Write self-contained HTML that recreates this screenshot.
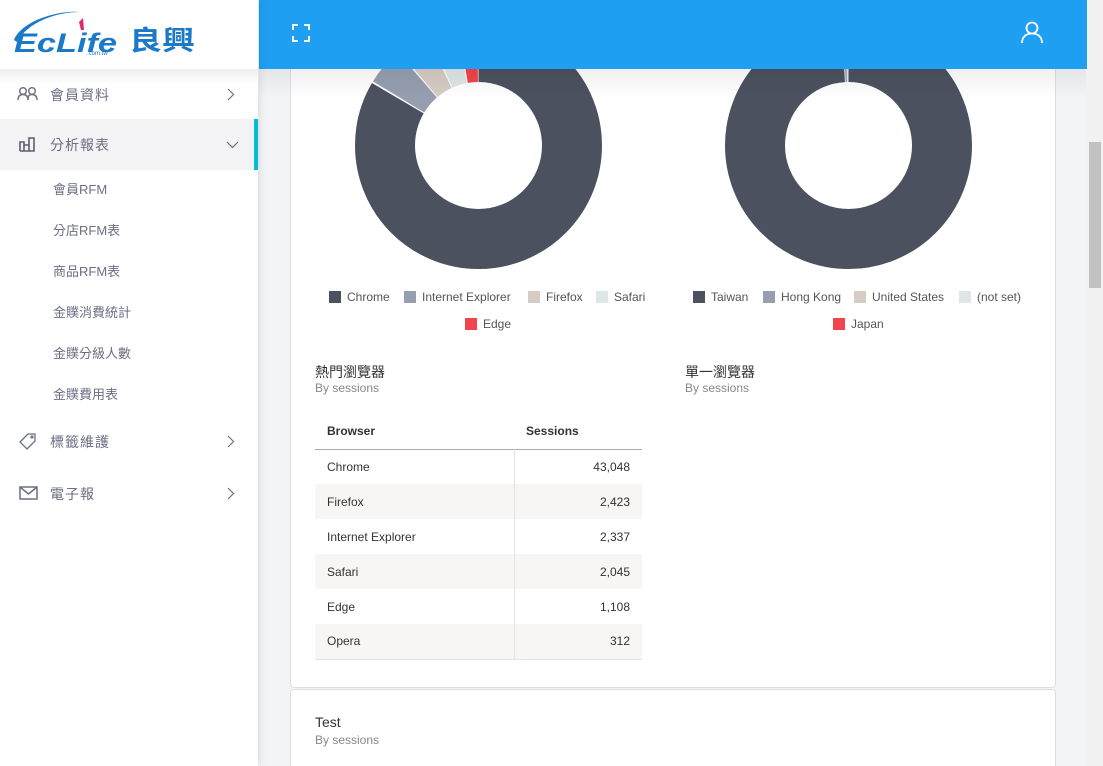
<!DOCTYPE html>
<html><head><meta charset="utf-8">
<style>
*{margin:0;padding:0;box-sizing:border-box}
html,body{width:1103px;height:766px;overflow:hidden}
body{background:#f3f4f8;font-family:"Liberation Sans","Noto Sans CJK TC",sans-serif;position:relative}
.abs{position:absolute}
#side{left:0;top:0;width:258px;height:766px;background:#fff;box-shadow:1px 0 8px rgba(0,0,0,.12);z-index:3}
.mi{position:absolute;left:0;width:258px;height:51px;color:#6b6f82;font-size:14px}
.mi .t{position:absolute;left:50px;top:50%;transform:translateY(-50%);letter-spacing:1px}
.mi svg{position:absolute}
.sub{position:absolute;left:53px;font-size:13px;color:#6b6f82;line-height:16px}
#hdr{left:259px;top:0;width:828px;height:69px;background:#1e9ff2;z-index:2}
.card{position:absolute;background:#fff;border:1px solid #dcdde2;border-radius:4px}
.lg{position:absolute;font-size:12px;color:#555;white-space:nowrap;line-height:14px}
.lg i{display:inline-block;width:12px;height:12px;vertical-align:-2px;margin-right:6px}
.tt{position:absolute;font-size:14px;color:#333}
.ss{position:absolute;font-size:12px;color:#888}
table{border-collapse:collapse;font-size:12px;color:#333}
td{height:35px;padding:0 12px}
</style></head><body>
<div id="side" class="abs">
  <svg class="abs" style="left:0;top:0" width="210" height="68" viewBox="0 0 210 68">
    <path d="M14 40 C22 20 60 10 80 12 C56 12 28 22 17 42Z" fill="#1a7ac8"/>
    <text x="14" y="52" font-family="Liberation Sans" font-weight="bold" font-style="italic" font-size="27" fill="#1a7ac8" textLength="103" lengthAdjust="spacingAndGlyphs">EcLife</text>
    <path d="M79 22 l4 -4 l1 12 l-3 0z" fill="#e4237a"/>
    <text x="87" y="55" font-family="Liberation Sans" font-size="6" fill="#1a7ac8">.com.tw</text>
    <text x="129" y="50" font-family="Noto Sans CJK TC" font-weight="bold" font-size="27" fill="#1a7ac8" textLength="66" lengthAdjust="spacingAndGlyphs">良興</text>
  </svg>
  <div class="mi" style="top:69px;background:linear-gradient(#eeeef0,#fff 30%)">
    <svg style="left:17px;top:17px" width="22" height="16" viewBox="0 0 22 16" fill="none" stroke="#6b6f82" stroke-width="1.4"><circle cx="6" cy="5" r="3.3"/><path d="M1 14c0-4 2-5.5 5-5.5s5 1.5 5 5.5"/><circle cx="15" cy="5" r="3.3"/><path d="M11 14c0-4 1-5.5 4-5.5s5 1.5 5 5.5"/></svg>
    <span class="t">會員資料</span>
    <svg style="left:227px;top:19px" width="8" height="13" fill="none" stroke="#6b6f82" stroke-width="1.2"><path d="M1 1l5.5 5.5L1 12"/></svg>
  </div>
  <div class="mi" style="top:119px;background:#f3f3f5;border-right:4px solid #00bcd4">
    <svg style="left:19px;top:17px" width="18" height="16" fill="none" stroke="#5b5f72" stroke-width="1.6"><path d="M1 15V6h4v9M5 15V9h5v6M10 15V2h5v13H1"/></svg>
    <span class="t">分析報表</span>
    <svg style="left:226px;top:22px" width="13" height="8" fill="none" stroke="#6b6f82" stroke-width="1.2"><path d="M1 1l5.5 5.5L12 1"/></svg>
  </div>
  <div class="sub" style="top:182px">會員RFM</div>
  <div class="sub" style="top:223px">分店RFM表</div>
  <div class="sub" style="top:264px">商品RFM表</div>
  <div class="sub" style="top:305px">金贌消費統計</div>
  <div class="sub" style="top:346px">金贌分級人數</div>
  <div class="sub" style="top:387px">金贌費用表</div>
  <div class="mi" style="top:416px">
    <svg style="left:18px;top:16px" width="20" height="18" fill="none" stroke="#6b6f82" stroke-width="1.3"><path d="M2 10L10 2h7v7l-8 8z"/><circle cx="14" cy="5" r="1"/></svg>
    <span class="t">標籤維護</span>
    <svg style="left:227px;top:19px" width="8" height="13" fill="none" stroke="#6b6f82" stroke-width="1.2"><path d="M1 1l5.5 5.5L1 12"/></svg>
  </div>
  <div class="mi" style="top:468px">
    <svg style="left:19px;top:18px" width="19" height="14" fill="none" stroke="#6b6f82" stroke-width="1.5"><rect x="1" y="1" width="17" height="12"/><path d="M1 1l8.5 7L18 1"/></svg>
    <span class="t">電子報</span>
    <svg style="left:227px;top:19px" width="8" height="13" fill="none" stroke="#6b6f82" stroke-width="1.2"><path d="M1 1l5.5 5.5L1 12"/></svg>
  </div>
</div>

<div id="hdr" class="abs">
  <svg style="position:absolute;left:33px;top:24px" width="18" height="18" fill="none" stroke="#fff" stroke-width="2"><path d="M1 6V1h5M12 1h5v5M17 12v5h-5M6 17H1v-5"/></svg>
  <svg style="position:absolute;left:762px;top:21px" width="22" height="23" fill="none" stroke="#fff" stroke-width="1.8"><circle cx="11" cy="7" r="5.5"/><path d="M1 22c0-6 4-9.5 10-9.5s10 3.5 10 9.5"/></svg>
</div>

<div class="abs" style="left:1086px;top:0;width:17px;height:766px;background:#f1f1f1"></div>
<div class="abs" style="left:1089px;top:142px;width:12px;height:146px;background:#c1c1c1"></div>

<div class="card" style="left:290px;top:-20px;width:766px;height:708px"></div>
<div class="card" style="left:290px;top:689px;width:766px;height:90px"></div>
<div class="abs" style="left:259px;top:69px;width:827px;height:30px;background:linear-gradient(rgba(0,0,0,.06),rgba(0,0,0,0));z-index:1"></div>

<svg class="abs" style="left:0;top:0;z-index:0" width="1103" height="766">
  <g transform="translate(478.5,145.5) rotate(-90)" fill="none" stroke-width="60">
    <circle r="93.5" stroke="#4c5160" stroke-dasharray="490 600" stroke-dashoffset="0"/>
    <circle r="93.5" stroke="#959fb0" stroke-dasharray="29 600" stroke-dashoffset="-491.5"/>
    <circle r="93.5" stroke="#d6ccc4" stroke-dasharray="24.5 600" stroke-dashoffset="-521.8"/>
    <circle r="93.5" stroke="#dfe7e6" stroke-dasharray="22.5 600" stroke-dashoffset="-547.6"/>
    <circle r="93.5" stroke="#f2444a" stroke-dasharray="15 600" stroke-dashoffset="-571.4"/>
  </g>
  <g transform="translate(848.5,145.5) rotate(-90)" fill="none" stroke-width="60">
    <circle r="93.5" stroke="#4c5160" stroke-dasharray="582 600"/>
    <circle r="93.5" stroke="#959fb0" stroke-dasharray="2 600" stroke-dashoffset="-583"/>
    <circle r="93.5" stroke="#dfe7e6" stroke-dasharray="1.5 600" stroke-dashoffset="-585.5"/>
  </g>
</svg>

<div class="lg" style="left:329px;top:290px"><i style="background:#4c5160"></i>Chrome</div>
<div class="lg" style="left:404px;top:290px"><i style="background:#959fb0"></i>Internet Explorer</div>
<div class="lg" style="left:528px;top:290px"><i style="background:#d6ccc4"></i>Firefox</div>
<div class="lg" style="left:596px;top:290px"><i style="background:#dfe7e6"></i>Safari</div>
<div class="lg" style="left:465px;top:317px"><i style="background:#f2444a"></i>Edge</div>

<div class="lg" style="left:693px;top:290px"><i style="background:#4c5160"></i>Taiwan</div>
<div class="lg" style="left:763px;top:290px"><i style="background:#959fb0"></i>Hong Kong</div>
<div class="lg" style="left:854px;top:290px"><i style="background:#d6ccc4"></i>United States</div>
<div class="lg" style="left:959px;top:290px"><i style="background:#dfe7e6"></i>(not set)</div>
<div class="lg" style="left:833px;top:317px"><i style="background:#f2444a"></i>Japan</div>

<div class="tt" style="left:315px;top:362px">熱門瀏覽器</div>
<div class="ss" style="left:315px;top:381px">By sessions</div>
<div class="tt" style="left:685px;top:362px">單一瀏覽器</div>
<div class="ss" style="left:685px;top:381px">By sessions</div>

<table class="abs" style="left:315px;top:413px;width:327px">
  <tr style="height:36px;border-bottom:1px solid #aaa"><td style="font-weight:bold;width:199px">Browser</td><td style="font-weight:bold">Sessions</td></tr>
  <tr><td style="border-right:1px solid #e3e3e3">Chrome</td><td style="text-align:right">43,048</td></tr>
  <tr style="background:#f7f6f4"><td style="border-right:1px solid #e3e3e3">Firefox</td><td style="text-align:right">2,423</td></tr>
  <tr><td style="border-right:1px solid #e3e3e3">Internet Explorer</td><td style="text-align:right">2,337</td></tr>
  <tr style="background:#f7f6f4"><td style="border-right:1px solid #e3e3e3">Safari</td><td style="text-align:right">2,045</td></tr>
  <tr><td style="border-right:1px solid #e3e3e3">Edge</td><td style="text-align:right">1,108</td></tr>
  <tr style="background:#f7f6f4;border-bottom:1px solid #e3e3e3"><td style="border-right:1px solid #e3e3e3">Opera</td><td style="text-align:right">312</td></tr>
</table>

<div class="tt" style="left:315px;top:714px">Test</div>
<div class="ss" style="left:315px;top:733px">By sessions</div>
</body></html>
